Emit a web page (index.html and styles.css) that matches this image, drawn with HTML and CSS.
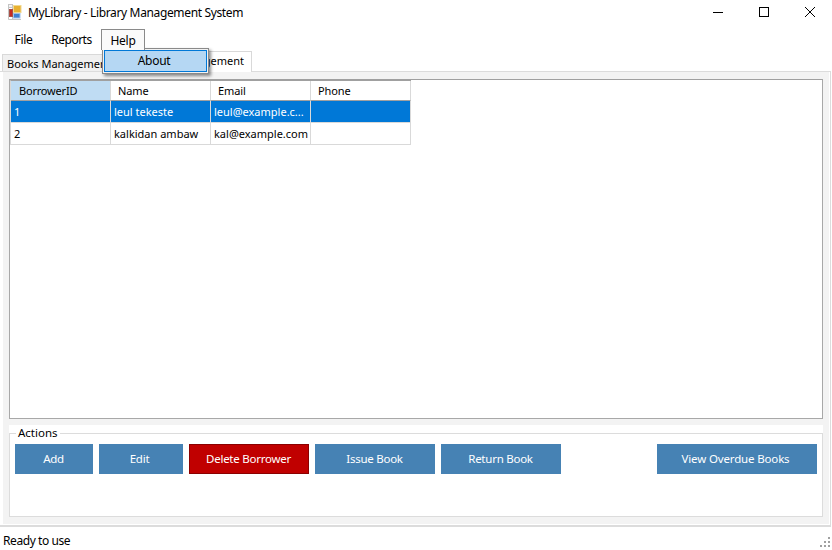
FILE: index.html
```html
<!DOCTYPE html>
<html lang="en">
<head>
<meta charset="utf-8">
<title>MyLibrary - Library Management System</title>
<link rel="stylesheet" href="styles.css">
</head>
<body>
<div class="window">
  <header class="titlebar">
    <svg class="app-icon" width="14" height="16" viewBox="0 0 14 16">
      <path d="M0.5 3.5H13M0.5 3.5V15.5H13M4.5 0.5V15.5" fill="none" stroke="#c4c4c4"/>
      <rect x="0.5" y="0.5" width="4" height="3" fill="#f4f4f4" stroke="#c4c4c4"/>
      <rect x="5.5" y="1.5" width="7.5" height="7" fill="#e8b030" stroke="#f0d890"/>
      <rect x="1.5" y="5.5" width="3" height="7" fill="#c82820" stroke="#a85048"/>
      <rect x="5.5" y="9.5" width="6.5" height="4.5" fill="#4080d0" stroke="#a0c0e8"/>
    </svg>
    <span class="title">MyLibrary - Library Management System</span>
    <div class="win-controls">
      <svg width="10" height="10" viewBox="0 0 10 10" class="win-min"><path d="M0 5.5H10" stroke="#000"/></svg>
      <svg width="10" height="10" viewBox="0 0 10 10" class="win-max"><rect x="0.5" y="0.5" width="9" height="9" fill="none" stroke="#000"/></svg>
      <svg width="10" height="10" viewBox="0 0 10 10" class="win-close"><path d="M0 0L10 10M10 0L0 10" stroke="#000" stroke-width="1"/></svg>
    </div>
  </header>

  <nav class="menubar">
    <span class="menu-item menu-file">File</span>
    <span class="menu-item menu-reports">Reports</span>
    <span class="menu-item menu-help">Help</span>
    <div class="dropdown"><div class="dropdown-item">About</div></div>
  </nav>

  <div class="tabs">
    <span class="tab tab-books">Books Management</span>
    <span class="tab tab-active">Borrowers Management</span>
  </div>

  <main class="panel">
    <div class="panel-inner">
      <section class="grid-box">
        <div class="grid">
          <div class="cell head head-sel">BorrowerID</div>
          <div class="cell head">Name</div>
          <div class="cell head">Email</div>
          <div class="cell head">Phone</div>
          <div class="cell sel">1</div>
          <div class="cell sel">leul tekeste</div>
          <div class="cell sel">leul@example.c...</div>
          <div class="cell sel"></div>
          <div class="cell">2</div>
          <div class="cell">kalkidan ambaw</div>
          <div class="cell">kal@example.com</div>
          <div class="cell"></div>
        </div>
      </section>
      <section class="group">
        <div class="group-frame">
          <span class="legend">Actions</span>
          <div class="actions">
            <button class="btn btn-add">Add</button>
            <button class="btn btn-edit">Edit</button>
            <button class="btn btn-delete">Delete Borrower</button>
            <button class="btn btn-wide">Issue Book</button>
            <button class="btn btn-wide">Return Book</button>
            <button class="btn btn-overdue">View Overdue Books</button>
          </div>
        </div>
      </section>
    </div>
  </main>

  <footer class="statusbar">
    <span>Ready to use</span>
    <svg class="grip" width="12" height="12" viewBox="0 0 12 12" fill="#a0a0a0">
      <rect x="9" y="1" width="2" height="2"/>
      <rect x="5" y="5" width="2" height="2"/><rect x="9" y="5" width="2" height="2"/>
      <rect x="1" y="9" width="2" height="2"/><rect x="5" y="9" width="2" height="2"/><rect x="9" y="9" width="2" height="2"/>
    </svg>
  </footer>
</div>
</body>
</html>
```
FILE: styles.css
```css
* { box-sizing: border-box; }
html, body { margin: 0; padding: 0; }
body {
  width: 832px; height: 550px; overflow: hidden; background: #fff; color: #000;
  font-family: "Noto Sans", "Open Sans", sans-serif; font-size: 11px;
}
.window { display: flex; flex-direction: column; height: 550px; position: relative; }

.titlebar { height: 28px; display: flex; align-items: center; padding-left: 8px; flex: none; }
.app-icon { flex: none; margin-top: -4px; }
.title { margin-left: 6px; font-size: 12px; margin-top: -4px; letter-spacing: -0.36px; white-space: nowrap; }
.win-controls { margin-left: auto; display: flex; align-items: center; margin-top: -5px; }
.win-min { margin-right: 36px; }
.win-max { margin-right: 36px; }
.win-close { margin-right: 17px; }

.menubar { height: 22px; flex: none; display: flex; padding-left: 4px; position: relative; font-size: 12px; letter-spacing: -0.3px; }
.menu-item { display: flex; align-items: center; justify-content: center; height: 21px; margin-top: 1px; }
.menu-file { width: 38px; padding-left: 1px; }
.menu-reports { width: 59px; letter-spacing: -0.5px; }
.menu-help { width: 44px; border: 1px solid #8a8a8a; border-bottom: 0; background: #fafafa; z-index: 3; position: relative; }
.dropdown {
  position: absolute; left: 102px; top: 20px; width: 107px; height: 26px; z-index: 2;
  background: #f2f2f2; border: 1px solid #8a8a8a; padding: 1px;
  box-shadow: 2px 2px 3px rgba(0,0,0,.45);
}
.dropdown-item {
  height: 22px; background: #b5d7f3; border: 1px solid #0078d7; display: flex;
  align-items: center; justify-content: center; font-size: 12px; padding: 0 3px 2px 0;
}

.tabs { height: 21px; flex: none; display: flex; align-items: flex-end; padding-left: 2px; position: relative; z-index: 1; white-space: nowrap; }
.tab { display: flex; align-items: center; border: 1px solid #d9d9d9; background: #f0f0f0; }
.tab-books { width: 121px; height: 17px; padding-left: 4px; border-bottom: 0; overflow: hidden; }
.tab-active { width: 129px; height: 21px; background: #fff; justify-content: flex-end; padding-right: 7px; border-bottom: 0; margin-bottom: -1px; padding-bottom: 3px; position: relative; }

.panel {
  height: 456px; flex: none; margin-right: 1px;
  border: 1px solid #dcdcdc; border-width: 1px 1px 2px 0;
  padding: 0 1px 1px 3px; display: flex;
}
.panel-inner { flex: 1; background: #f3f3f3; padding: 7px 6px 0 6px; display: flex; flex-direction: column; }
.grid-box { height: 340px; flex: none; background: #fff; border: 1px solid #a8a8a8; border-top-color: #a0a0a0; }
.grid {
  display: grid; grid-template-columns: 100px 100px 100px 100px; grid-template-rows: 20px 22px 22px;
  width: 401px; border-left: 1px solid #d9d9d9; border-top: 1px solid #a0a0a0;
}
.cell {
  border-right: 1px solid #d9d9d9; border-bottom: 1px solid #d9d9d9; padding-left: 3px;
  display: flex; align-items: center; white-space: nowrap; overflow: hidden;
}
.head { padding-left: 7px; border-bottom-color: #a0a0a0; letter-spacing: -0.1px; }
.head-sel { background: #bfdcf3; padding-left: 8px; letter-spacing: -0.2px; }
.sel { background: #0078d7; color: #fff; }

.group { height: 92px; flex: none; margin-top: 6px; background: #fff; padding-top: 8px; }
.group-frame { height: 84px; border: 1px solid #dcdcdc; position: relative; padding: 10px 5px 0 5px; }
.legend { position: absolute; left: 6px; top: -9px; background: #fff; padding: 0 2px; font-size: 11.5px; }
.actions { display: flex; gap: 6px; }
.btn {
  height: 30px; border: 0; padding: 0 1px 2px 0; background: #4682b4; color: #fff; flex: none;
  font: inherit; font-size: 11.5px; letter-spacing: -0.25px;
}
.btn-add { width: 78px; }
.btn-edit { width: 84px; padding-right: 3px; }
.btn-delete { width: 120px; background: #c00000; border: 1px solid #8b0000; }
.btn-wide { width: 120px; }
.btn-overdue { width: 160px; margin-left: 90px; padding-right: 3px; letter-spacing: -0.15px; }

.statusbar { flex: 1; display: flex; align-items: center; padding: 4px 0 0 3px; font-size: 12px; letter-spacing: -0.42px; position: relative; }
.grip { position: absolute; right: 1px; bottom: 2px; }
```
